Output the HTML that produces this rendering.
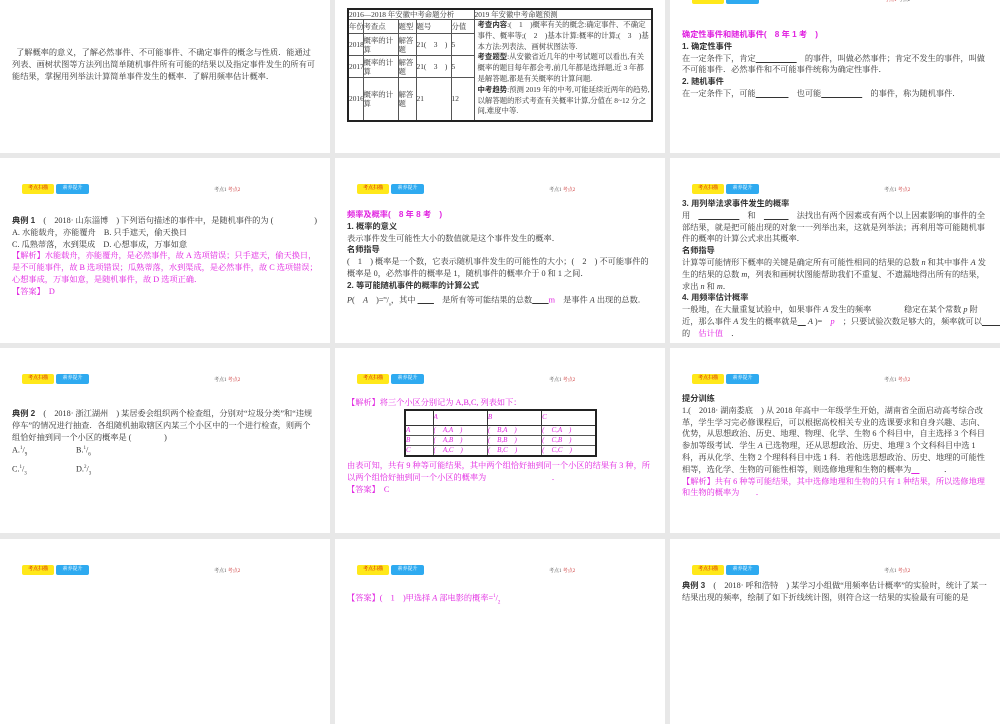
<!DOCTYPE html>
<html><head><meta charset="utf-8"><style>
*{margin:0;padding:0;box-sizing:border-box}
body{width:1000px;height:600px;background:#e8e8e8;position:relative;overflow:hidden;font-family:"Liberation Serif","Noto Serif CJK SC","Noto Sans CJK SC",serif;color:#333}
.p{position:absolute;width:330px;height:185px;background:#fff;overflow:hidden}
.by{position:absolute;left:22px;top:26px;width:32px;height:10px;background:#ffe81a;border-radius:2px;font-size:5px;color:#c00;text-align:center;line-height:10px}
.bb{position:absolute;left:56px;top:26px;width:33px;height:10px;background:#2eaaf0;border-radius:2px;font-size:5px;color:#fff;text-align:center;line-height:10px}
.kd{position:absolute;left:214px;top:28px;font-size:5px;color:#555}
.kd b{color:#c33;font-weight:normal}
.t{position:absolute;left:12px;width:306px;font-size:8.2px;line-height:11.8px}
.m{color:#e020e0}
.h{font-weight:bold;font-family:"Liberation Sans","Noto Sans CJK SC",sans-serif}
table{border-collapse:collapse;table-layout:fixed}
td{border:1px solid #555;overflow:hidden;white-space:nowrap}
</style></head><body>

<!-- row 0 -->
<div class="p" style="left:0;top:-32px">
<div class="t" style="top:79px;line-height:12px">&nbsp;&nbsp;了解概率的意义，了解必然事件、不可能事件、不确定事件的概念与性质．能通过列表、画树状图等方法列出简单随机事件所有可能的结果以及指定事件发生的所有可能结果，掌握用列举法计算简单事件发生的概率．了解用频率估计概率．</div>
</div>

<div class="p" style="left:335px;top:-32px">
<table style="position:absolute;left:12px;top:40px;width:306px;border:2px solid #222;font-size:7.4px;line-height:9px">
<colgroup><col style="width:15px"><col style="width:35px"><col style="width:18px"><col style="width:35px"><col style="width:23px"><col></colgroup>
<tr style="height:9px"><td colspan="5">2016—2018 年安徽中考命题分析</td><td>2019 年安徽中考命题预测</td></tr>
<tr style="height:14px"><td>年份</td><td>考查点</td><td>题型</td><td>题号</td><td>分值</td>
<td rowspan="4" style="vertical-align:top;padding-left:3px;line-height:10.8px;white-space:normal"><span class="h">考查内容</span>:(　1　)概率有关的概念:确定事件、不确定事件、概率等;(　2　)基本计算:概率的计算;(　3　)基本方法:列表法、画树状图法等.<br><span class="h">考查题型</span>:从安徽省近几年的中考试题可以看出,有关概率的题目每年都会考,前几年都是选择题,近 3 年都是解答题,都是有关概率的计算问题.<br><span class="h">中考趋势</span>:预测 2019 年的中考,可能延续近两年的趋势,以解答题的形式考查有关概率计算,分值在 8~12 分之间,难度中等.</td></tr>
<tr style="height:22px"><td>2018</td><td style="white-space:normal">概率的计算</td><td style="white-space:normal">解答题</td><td>21(　3　)</td><td>5</td></tr>
<tr style="height:22px"><td>2017</td><td style="white-space:normal">概率的计算</td><td style="white-space:normal">解答题</td><td>21(　3　)</td><td>5</td></tr>
<tr style="height:43px"><td>2016</td><td style="white-space:normal">概率的计算</td><td style="white-space:normal">解答题</td><td>21</td><td>12</td></tr>
</table>
</div>

<div class="p" style="left:670px;top:-32px">
<div class="by">考点扫描</div><div class="bb">素养提升</div><div class="kd"><b>考点1</b> 考点2</div>
<div class="t" style="top:61px"><span class="m h">确定性事件和随机事件(　8 年 1 考　)</span><br><span class="h">1. 确定性事件</span><br>在一定条件下，肯定<u>　　　　　</u>　的事件，叫做必然事件；肯定不发生的事件，叫做不可能事件．必然事件和不可能事件统称为确定性事件．<br><span class="h">2. 随机事件</span><br>在一定条件下，可能<u>　　　　</u>　也可能<u>　　　　　</u>　的事件，称为随机事件．</div>
</div>

<!-- row 1 -->
<div class="p" style="left:0;top:158px">
<div class="by">考点扫描</div><div class="bb">素养提升</div><div class="kd">考点1 <b>考点2</b></div>
<div class="t" style="top:57px"><span class="h">典例 1</span>　(　2018· 山东淄博　) 下列语句描述的事件中，是随机事件的为 (　　　　　)<br>A. 水能载舟，亦能覆舟　B. 只手遮天，偷天换日<br>C. 瓜熟蒂落，水到渠成　D. 心想事成，万事如意<br><span class="m">【解析】水能载舟，亦能覆舟，是必然事件，故 A 选项错误；只手遮天，偷天换日，是不可能事件，故 B 选项错误；瓜熟蒂落，水到渠成，是必然事件，故 C 选项错误；心想事成，万事如意，是随机事件，故 D 选项正确．<br>【答案】　D</span></div>
</div>

<div class="p" style="left:335px;top:158px">
<div class="by">考点扫描</div><div class="bb">素养提升</div><div class="kd">考点1 <b>考点2</b></div>
<div class="t" style="top:51px"><span class="m h">频率及概率(　8 年 8 考　)</span><br><span class="h">1. 概率的意义</span><br>表示事件发生可能性大小的数值就是这个事件发生的概率．<br><span class="h">名师指导</span><br>(　1　) 概率是一个数，它表示随机事件发生的可能性的大小；(　2　) 不可能事件的概率是 0，必然事件的概率是 1，随机事件的概率介于 0 和 1 之间．<br><span class="h">2. 等可能随机事件的概率的计算公式</span><br><i>P</i>(　<i>A</i>　)=<sup style="font-size:4px">m</sup>/<sub style="font-size:4px">n</sub>，其中 <u>　　</u>　是所有等可能结果的总数<u>　　</u><span class="m">m</span>　是事件 <i>A</i> 出现的总数．</div>
</div>

<div class="p" style="left:670px;top:158px">
<div class="by">考点扫描</div><div class="bb">素养提升</div><div class="kd">考点1 <b>考点2</b></div>
<div class="t" style="top:40px"><span class="h">3. 用列举法求事件发生的概率</span><br>用　<u>　　　　　</u>　和　<u>　　　</u>　法找出有两个因素或有两个以上因素影响的事件的全部结果，就是把可能出现的对象一一列举出来，这就是列举法；再利用等可能随机事件的概率的计算公式求出其概率．<br><span class="h">名师指导</span><br>计算等可能情形下概率的关键是确定所有可能性相同的结果的总数 <i>n</i> 和其中事件 <i>A</i> 发生的结果的总数 <i>m</i>，列表和画树状图能帮助我们不重复、不遗漏地得出所有的结果，求出 <i>n</i> 和 <i>m</i>．<br><span class="h">4. 用频率估计概率</span><br>一般地，在大量重复试验中，如果事件 <i>A</i> 发生的频率　　　　稳定在某个常数 <i>p</i> 附近，那么事件 <i>A</i> 发生的概率就是<u>　</u> <i>A</i> )=　<span class="m"><i>p</i></span>　；只要试验次数足够大的，频率就可以<u>　　　　　</u>的　<span class="m">估计值</span>　．</div>
</div>

<!-- row 2 -->
<div class="p" style="left:0;top:348px">
<div class="by">考点扫描</div><div class="bb">素养提升</div><div class="kd">考点1 <b>考点2</b></div>
<div class="t" style="top:60px"><span class="h">典例 2</span>　(　2018· 浙江湖州　) 某居委会组织两个检查组，分别对“垃圾分类”和“违规停车”的情况进行抽查．各组随机抽取辖区内某三个小区中的一个进行检查，则两个组恰好抽到同一个小区的概率是 (　　　　)<br>A.<sup style="font-size:5px">1</sup>/<sub style="font-size:5px">9</sub><span style="position:absolute;left:64px">B.<sup style="font-size:5px">1</sup>/<sub style="font-size:5px">6</sub></span><br>C.<sup style="font-size:5px">1</sup>/<sub style="font-size:5px">3</sub><span style="position:absolute;left:64px">D.<sup style="font-size:5px">2</sup>/<sub style="font-size:5px">3</sub></span></div>
</div>

<div class="p" style="left:335px;top:348px">
<div class="by">考点扫描</div><div class="bb">素养提升</div><div class="kd">考点1 <b>考点2</b></div>
<div class="t m" style="top:49px">【解析】将三个小区分别记为 A,B,C, 列表如下：</div>
<table class="m" style="position:absolute;left:69px;top:61px;width:193px;border:2px solid #222;font-size:7px;line-height:9px;font-style:italic">
<colgroup><col style="width:28px"><col><col><col></colgroup>
<tr style="height:15px"><td style="border-color:#333"></td><td style="border-color:#333">A</td><td style="border-color:#333">B</td><td style="border-color:#333">C</td></tr>
<tr><td>A</td><td>(　A,A　)</td><td>(　B,A　)</td><td>(　C,A　)</td></tr>
<tr><td>B</td><td>(　A,B　)</td><td>(　B,B　)</td><td>(　C,B　)</td></tr>
<tr><td>C</td><td>(　A,C　)</td><td>(　B,C　)</td><td>(　C,C　)</td></tr>
</table>
<div class="t m" style="top:112px">由表可知，共有 9 种等可能结果，其中两个组恰好抽到同一个小区的结果有 3 种，所以两个组恰好抽到同一个小区的概率为　　　　　　　　．<br>【答案】　C</div>
</div>

<div class="p" style="left:670px;top:348px">
<div class="by">考点扫描</div><div class="bb">素养提升</div><div class="kd">考点1 <b>考点2</b></div>
<div class="t" style="top:45px"><span class="h">提分训练</span><br>1.(　2018· 湖南娄底　) 从 2018 年高中一年级学生开始，湖南省全面启动高考综合改革，学生学习完必修课程后，可以根据高校相关专业的选课要求和自身兴趣、志向、优势，从思想政治、历史、地理、物理、化学、生物 6 个科目中，自主选择 3 个科目参加等级考试．学生 <i>A</i> 已选物理，还从思想政治、历史、地理 3 个文科科目中选 1 科，再从化学、生物 2 个理科科目中选 1 科．若他选思想政治、历史、地理的可能性相等，选化学、生物的可能性相等，则选修地理和生物的概率为<u class="m">　</u>　　　．<br><span class="m">【解析】共有 6 种等可能结果，其中选修地理和生物的只有 1 种结果，所以选修地理和生物的概率为　　．</span></div>
</div>

<!-- row 3 -->
<div class="p" style="left:0;top:539px">
<div class="by">考点扫描</div><div class="bb">素养提升</div><div class="kd">考点1 <b>考点2</b></div>
</div>
<div class="p" style="left:335px;top:539px">
<div class="by">考点扫描</div><div class="bb">素养提升</div><div class="kd">考点1 <b>考点2</b></div>
<div class="t m" style="top:52px">【答案】(　1　)甲选择 <i>A</i> 部电影的概率=<sup style="font-size:5px">1</sup>/<sub style="font-size:5px">2</sub></div>
</div>
<div class="p" style="left:670px;top:539px">
<div class="by">考点扫描</div><div class="bb">素养提升</div><div class="kd">考点1 <b>考点2</b></div>
<div class="t" style="top:41px"><span class="h">典例 3</span>　(　2018· 呼和浩特　) 某学习小组做“用频率估计概率”的实验时，统计了某一结果出现的频率，绘制了如下折线统计图，则符合这一结果的实验最有可能的是</div>
</div>
</body></html>
